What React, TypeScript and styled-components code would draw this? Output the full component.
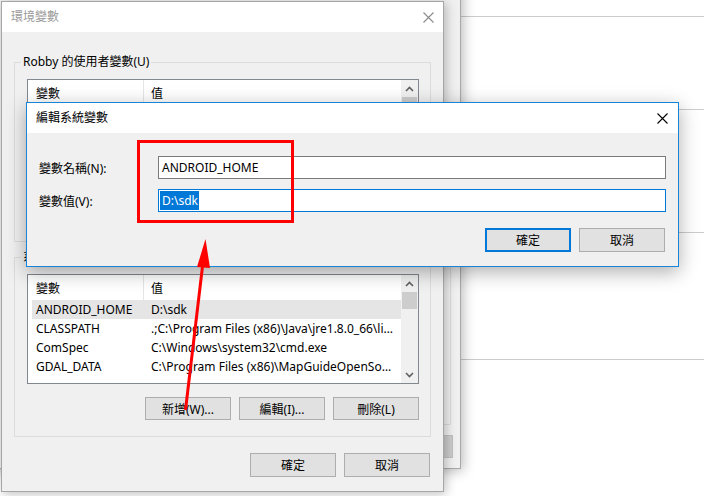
import React from "react";
import styled, { createGlobalStyle } from "styled-components";

const Global = createGlobalStyle`
  html, body { margin: 0; padding: 0; background: #ffffff; }
  body {
    font-family: "Noto Sans", "Noto Sans CJK TC", sans-serif;
    font-size: 12px;
    color: #000000;
  }
  * { box-sizing: border-box; }
`;

const Desktop = styled.div`
  position: relative;
  width: 704px;
  height: 496px;
  overflow: hidden;
  background: #ffffff;
`;

/* settings page behind the windows */
const SettingsPane = styled.div`
  position: absolute;
  left: 440px;
  top: 0;
  right: 0;
  display: flex;
  flex-direction: column;
`;

const PaneRow = styled.div<{ $h: number }>`
  height: ${(p) => p.$h}px;
  border-bottom: 1px solid #cccccc;
`;

/* window further back (system properties) */
const BackWindow = styled.div`
  position: absolute;
  left: -20px;
  top: -20px;
  width: 481px;
  height: 489px;
  background: #f0f0f0;
  border: 1px solid #a8a8a8;
  box-shadow: 2px 2px 12px rgba(0, 0, 0, 0.28);
  display: flex;
  flex-direction: column;
  justify-content: flex-end;
  align-items: flex-end;
  padding: 0 6px 10px 0;
`;

const BackGroup = styled.div`
  width: 300px;
  height: 200px;
  margin-right: 3px;
  border: 1px solid #dcdcdc;
`;

const BackButton = styled.div`
  width: 86px;
  height: 23px;
  margin-top: 10px;
  margin-right: 1px;
  background: #cccccc;
  border: 1px solid #bfbfbf;
`;

/* 環境變數 window */
const MainWindow = styled.div`
  position: absolute;
  left: 1px;
  top: 1px;
  width: 443px;
  height: 491px;
  background: #f0f0f0;
  border: 1px solid #a6a6a6;
  box-shadow: 2px 2px 10px rgba(0, 0, 0, 0.25);
  display: flex;
  flex-direction: column;
`;

const TitleBar = styled.div<{ $h: number; $pl: number; $pr: number }>`
  height: ${(p) => p.$h}px;
  flex: none;
  background: #ffffff;
  display: flex;
  align-items: center;
  justify-content: space-between;
  padding: 0 ${(p) => p.$pr}px 0 ${(p) => p.$pl}px;
`;

const TitleText = styled.span<{ $dim?: boolean }>`
  color: ${(p) => (p.$dim ? "#9a9a9a" : "#000000")};
  font-size: 12px;
  line-height: 16px;
`;

const MainBody = styled.div`
  flex: 1;
  display: flex;
  flex-direction: column;
  padding: 30px 12px 0 12px;
`;

const GroupBox = styled.div<{ $mt?: number }>`
  height: 180px;
  margin-top: ${(p) => p.$mt ?? 0}px;
  border: 1px solid #dcdcdc;
  padding: 0 11px 0 12px;
  display: flex;
  flex-direction: column;
`;

const GroupLabel = styled.span`
  align-self: flex-start;
  margin: -9px 0 0 -6px;
  padding: 0 2px;
  height: 16px;
  line-height: 16px;
  background: #f0f0f0;
  white-space: nowrap;
`;

const ListView = styled.div`
  margin-top: 9px;
  height: 110px;
  border: 1px solid #828790;
  background: #ffffff;
  display: flex;
  overflow: hidden;
`;

const ListMain = styled.div`
  flex: 1;
  min-width: 0;
  display: flex;
  flex-direction: column;
`;

const HeaderRow = styled.div`
  height: 25px;
  flex: none;
  display: flex;
`;

const HeaderCell = styled.div<{ $w?: number; $pl: number; $divider?: boolean }>`
  ${(p) => (p.$w ? `width: ${p.$w}px; flex: none;` : "flex: 1;")}
  padding-left: ${(p) => p.$pl}px;
  display: flex;
  align-items: center;
  border-right: ${(p) => (p.$divider ? "1px solid #e5e5e5" : "none")};
`;

const Rows = styled.div`
  display: flex;
  flex-direction: column;
  padding-left: 4px;
`;

const Row = styled.div<{ $selected?: boolean }>`
  height: 19px;
  display: flex;
  align-items: center;
  background: ${(p) => (p.$selected ? "#e5e5e5" : "transparent")};
`;

const NameCell = styled.div`
  width: 112px;
  flex: none;
  padding-left: 4px;
  white-space: nowrap;
  overflow: hidden;
`;

const ValueCell = styled.div`
  flex: 1;
  min-width: 0;
  padding: 0 7px 0 7px;
  white-space: nowrap;
  overflow: hidden;
  text-overflow: ellipsis;
`;

const ScrollBar = styled.div`
  width: 17px;
  flex: none;
  background: #f0f0f0;
  display: flex;
  flex-direction: column;
`;

const ScrollArrow = styled.div`
  height: 17px;
  flex: none;
  display: flex;
  align-items: center;
  justify-content: center;
`;

const ScrollTrack = styled.div`
  flex: 1;
  padding: 0 1px;
`;

const ScrollThumb = styled.div`
  height: 17px;
  background: #cdcdcd;
`;

const ButtonRow = styled.div<{ $mt: number; $mr?: number }>`
  display: flex;
  justify-content: flex-end;
  gap: 8px;
  margin-top: ${(p) => p.$mt}px;
  margin-right: ${(p) => p.$mr ?? 0}px;
`;

const Button = styled.div<{ $h: number; $default?: boolean }>`
  width: 86px;
  height: ${(p) => p.$h}px;
  background: #e1e1e1;
  border: ${(p) => (p.$default ? "2px solid #0078d7" : "1px solid #adadad")};
  display: flex;
  align-items: center;
  justify-content: center;
  white-space: nowrap;
`;

/* 編輯系統變數 dialog */
const Dialog = styled.div`
  position: absolute;
  left: 26px;
  top: 102px;
  width: 653px;
  height: 165px;
  background: #f0f0f0;
  border: 1px solid #1883d7;
  box-shadow: 0 5px 18px rgba(0, 0, 0, 0.32);
  display: flex;
  flex-direction: column;
`;

const DialogBody = styled.div`
  flex: 1;
  padding: 23px 12px 0 12px;
  display: flex;
  flex-direction: column;
`;

const FormGrid = styled.div`
  display: grid;
  grid-template-columns: 119px 508px;
  grid-auto-rows: 23px;
  row-gap: 10px;
  align-items: center;
`;

const FieldLabel = styled.span`
  white-space: nowrap;
`;

const TextField = styled.div<{ $focused?: boolean }>`
  height: 23px;
  background: #ffffff;
  border: 1px solid ${(p) => (p.$focused ? "#0078d7" : "#7a7a7a")};
  padding-left: 3px;
  display: flex;
  align-items: center;
  white-space: nowrap;
`;

const Selection = styled.span`
  background: #0078d7;
  color: #ffffff;
  margin-left: -2px;
  padding: 1px 1px 1px 2px;
  line-height: 17px;
`;

/* annotations drawn over the screenshot */
const RedBox = styled.div`
  position: absolute;
  left: 137px;
  top: 140px;
  width: 157px;
  height: 83px;
  border: 3px solid #ff0000;
  pointer-events: none;
`;

const ArrowLayer = styled.svg`
  position: absolute;
  left: 0;
  top: 0;
  pointer-events: none;
`;

const CloseIcon = ({ color }: { color: string }) => (
  <svg width="11" height="11" viewBox="0 0 11 11">
    <path d="M0.5 0.5 L10.5 10.5 M10.5 0.5 L0.5 10.5" stroke={color} strokeWidth="1.1" fill="none" />
  </svg>
);

const Chevron = ({ up }: { up?: boolean }) => (
  <svg width="9" height="6" viewBox="0 0 9 6">
    <polyline
      points={up ? "1,5 4.5,1.5 8,5" : "1,1 4.5,4.5 8,1"}
      stroke="#606060"
      strokeWidth="1.6"
      fill="none"
    />
  </svg>
);

type Var = { name: string; value: string; selected?: boolean };

const userVars: Var[] = [
  { name: "OneDrive", value: "C:\\Users\\Robby\\OneDrive" },
  { name: "Path", value: "C:\\Users\\Robby\\AppData\\Local\\Microsoft\\WindowsApps;" },
  { name: "TEMP", value: "%USERPROFILE%\\AppData\\Local\\Temp" },
  { name: "TMP", value: "%USERPROFILE%\\AppData\\Local\\Temp" },
];

const systemVars: Var[] = [
  { name: "ANDROID_HOME", value: "D:\\sdk", selected: true },
  { name: "CLASSPATH", value: ".;C:\\Program Files (x86)\\Java\\jre1.8.0_66\\lib\\ext\\QTJava.zip" },
  { name: "ComSpec", value: "C:\\Windows\\system32\\cmd.exe" },
  { name: "GDAL_DATA", value: "C:\\Program Files (x86)\\MapGuideOpenSource2.6\\Server\\GDAL" },
];

const VarList = ({ vars }: { vars: Var[] }) => (
  <ListView>
    <ListMain>
      <HeaderRow>
        <HeaderCell $w={116} $pl={8} $divider>變數</HeaderCell>
        <HeaderCell $pl={7}>值</HeaderCell>
      </HeaderRow>
      <Rows>
        {vars.map((v) => (
          <Row key={v.name} $selected={v.selected}>
            <NameCell>{v.name}</NameCell>
            <ValueCell>{v.value}</ValueCell>
          </Row>
        ))}
      </Rows>
    </ListMain>
    <ScrollBar>
      <ScrollArrow>
        <Chevron up />
      </ScrollArrow>
      <ScrollTrack>
        <ScrollThumb />
      </ScrollTrack>
      <ScrollArrow>
        <Chevron />
      </ScrollArrow>
    </ScrollBar>
  </ListView>
);

const VarGroup = ({ label, vars, mt }: { label: string; vars: Var[]; mt?: number }) => (
  <GroupBox $mt={mt}>
    <GroupLabel>{label}</GroupLabel>
    <VarList vars={vars} />
    <ButtonRow $mt={13}>
      <Button $h={23}>新增(W)...</Button>
      <Button $h={23}>編輯(I)...</Button>
      <Button $h={23}>刪除(L)</Button>
    </ButtonRow>
  </GroupBox>
);

export default function App() {
  return (
    <Desktop>
      <Global />
      <SettingsPane>
        <PaneRow $h={17} />
        <PaneRow $h={93} />
        <PaneRow $h={123} />
        <PaneRow $h={127} />
      </SettingsPane>

      <BackWindow>
        <BackGroup />
        <BackButton />
      </BackWindow>

      <MainWindow>
        <TitleBar $h={30} $pl={9} $pr={9}>
          <TitleText $dim>環境變數</TitleText>
          <CloseIcon color="#8a8a8a" />
        </TitleBar>
        <MainBody>
          <VarGroup label="Robby 的使用者變數(U)" vars={userVars} />
          <VarGroup label="系統變數(S)" vars={systemVars} mt={15} />
          <ButtonRow $mt={16} $mr={1}>
            <Button $h={24}>確定</Button>
            <Button $h={24}>取消</Button>
          </ButtonRow>
        </MainBody>
      </MainWindow>

      <Dialog>
        <TitleBar $h={30} $pl={9} $pr={10}>
          <TitleText>編輯系統變數</TitleText>
          <CloseIcon color="#000000" />
        </TitleBar>
        <DialogBody>
          <FormGrid>
            <FieldLabel>變數名稱(N):</FieldLabel>
            <TextField>ANDROID_HOME</TextField>
            <FieldLabel>變數值(V):</FieldLabel>
            <TextField $focused>
              <Selection>D:\sdk</Selection>
            </TextField>
          </FormGrid>
          <ButtonRow $mt={16} $mr={1}>
            <Button $h={24} $default>確定</Button>
            <Button $h={24}>取消</Button>
          </ButtonRow>
        </DialogBody>
      </Dialog>

      <RedBox />
      <ArrowLayer width="704" height="496" viewBox="0 0 704 496">
        <line x1="185.5" y1="410" x2="203.5" y2="258" stroke="#ff0000" strokeWidth="3" />
        <polygon points="205.5,239 197,267 210,268" fill="#ff0000" />
      </ArrowLayer>
    </Desktop>
  );
}
